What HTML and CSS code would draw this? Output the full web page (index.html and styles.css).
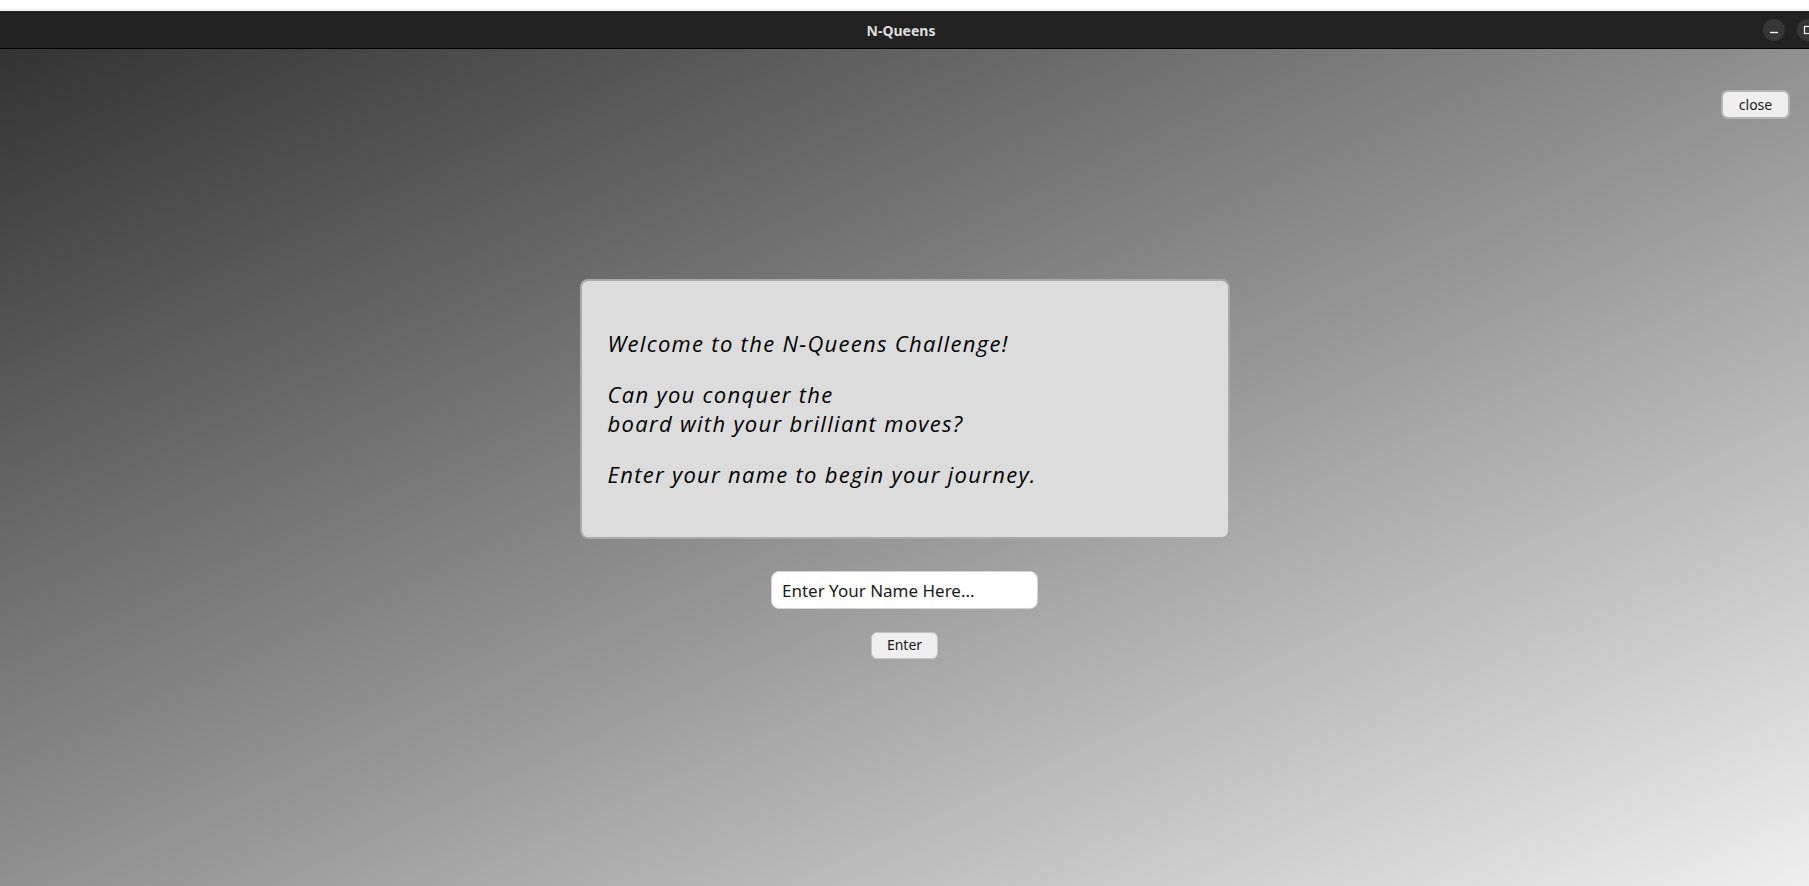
FILE: index.html
```html
<!DOCTYPE html>
<html lang="en">
<head>
<meta charset="utf-8">
<title>N-Queens</title>
<link rel="stylesheet" href="styles.css">
</head>
<body>
<div class="topstrip"></div>
<header class="titlebar">
  <div class="title">N-Queens</div>
  <div class="winctl">
    <span class="wbtn"><svg width="22" height="22" viewBox="0 0 22 22"><line x1="7" y1="13.5" x2="15" y2="13.5" stroke="#f2f2f2" stroke-width="1.4"/></svg></span>
    <span class="wbtn"><svg width="22" height="22" viewBox="0 0 22 22"><rect x="7.5" y="7.5" width="7" height="7" fill="none" stroke="#f2f2f2" stroke-width="1.2"/></svg></span>
  </div>
</header>
<main class="app">
  <div class="toolbar"><button class="btn close-btn">close</button></div>
  <section class="stage">
    <div class="card">
      <p>Welcome to the N-Queens Challenge!</p>
      <p>Can you conquer the<br>board with your brilliant moves?</p>
      <p>Enter your name to begin your journey.</p>
    </div>
    <input class="name" type="text" placeholder="Enter Your Name Here..." autofocus>
    <button class="btn enter-btn">Enter</button>
  </section>
</main>
</body>
</html>
```

FILE: styles.css
```css
html, body {
  margin: 0;
  padding: 0;
  height: 100%;
}
body {
  width: 1809px;
  height: 886px;
  overflow: hidden;
  display: flex;
  flex-direction: column;
  font-family: "Noto Sans", "DejaVu Sans", sans-serif;
  background: #fff;
}
.topstrip {
  height: 11px;
  background: #ffffff;
  box-shadow: inset 0 -2px 2px rgba(0,0,0,0.05);
  flex: none;
}
.titlebar {
  height: 37px;
  background: #222222;
  border-bottom: 1px solid #000;
  display: flex;
  align-items: center;
  justify-content: center;
  position: relative;
  flex: none;
  overflow: hidden;
}
.title {
  color: #dedede;
  font-weight: bold;
  font-size: 14px;
  margin-left: -7px;
  margin-top: 1px;
}
.winctl {
  position: absolute;
  top: 8px;
  left: 1763px;
  display: flex;
  gap: 12px;
}
.wbtn {
  width: 22px;
  height: 22px;
  border-radius: 50%;
  background: #363636;
  display: block;
}
.wbtn svg { display: block; }
.app {
  flex: 1;
  background: linear-gradient(to bottom right, #333333 0%, #909090 50%, #efefef 100%);
  display: flex;
  flex-direction: column;
}
.toolbar {
  display: flex;
  justify-content: flex-end;
  padding: 41px 19px 0 0;
}
.btn {
  font-family: "Noto Sans", "DejaVu Sans", sans-serif;
  background: #efefef;
  color: #1a1a1a;
  cursor: pointer;
}
.close-btn {
  width: 69px;
  height: 29px;
  font-size: 14px;
  border: 2px solid #b4b4b4;
  border-radius: 7px;
  padding: 0;
}
.stage {
  display: flex;
  flex-direction: column;
  align-items: center;
  padding-top: 160px;
}
.card {
  box-sizing: border-box;
  width: 650px;
  height: 260px;
  background: #dcdcdc;
  border: 2px solid #a9a9a9;
  border-radius: 8px;
  padding: 48px 26px 0;
  font-family: "Open Sans", "Noto Sans", sans-serif;
  font-style: italic;
  font-size: 22px;
  line-height: 28.6px;
  letter-spacing: 1.3px;
  color: #000;
}
.card p {
  margin: 0 0 22.5px;
}
.name {
  box-sizing: border-box;
  margin-top: 32px;
  width: 267px;
  height: 38px;
  border: 1px solid #d4d4d4;
  border-radius: 8px;
  background: #fff;
  padding: 0 10px;
  font-family: "Noto Sans", "DejaVu Sans", sans-serif;
  font-size: 17px;
  color: #111;
  outline: none;
}
.name::placeholder {
  color: #1a1a1a;
  opacity: 1;
}
.enter-btn {
  margin-top: 23px;
  width: 67px;
  height: 27px;
  font-size: 14px;
  border: 1px solid #c4c4c4;
  border-radius: 6px;
  padding: 0 0 2px;
}
```
